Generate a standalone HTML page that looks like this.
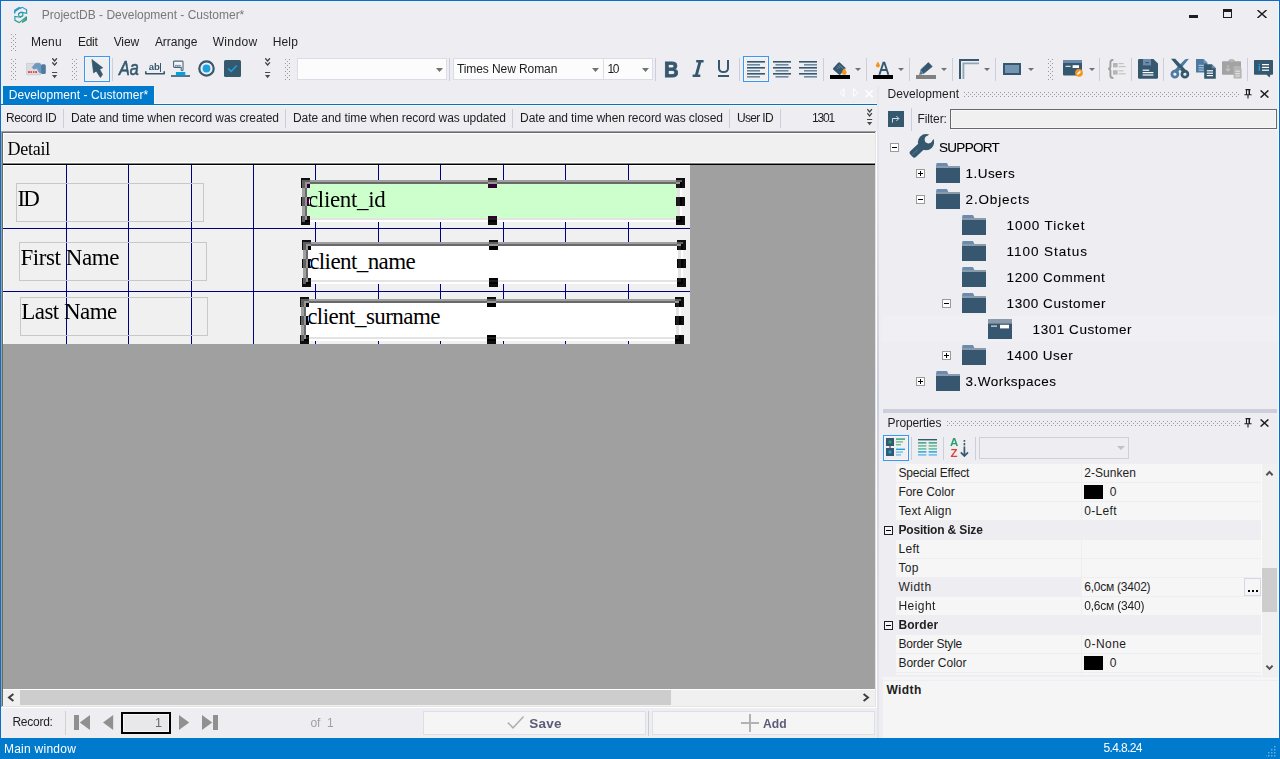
<!DOCTYPE html>
<html><head><meta charset="utf-8"><title>ProjectDB - Development - Customer*</title>
<style>
html,body{margin:0;padding:0;}
body{width:1280px;height:759px;overflow:hidden;position:relative;background:#eeeef2;}
div,span,svg{position:absolute;box-sizing:border-box;}
.t{white-space:pre;}
.s{font-family:"Liberation Sans",sans-serif;}
.r{font-family:"Liberation Serif",serif;}
.m{font-family:"Liberation Mono",monospace;}
.h{background:#fff;mix-blend-mode:difference;width:9px;height:9px;}
</style></head><body>
<div style="left:0px;top:0px;width:1280px;height:1px;background:#0a6fcc;"></div>
<div style="left:0px;top:0px;width:1px;height:759px;background:#0a6fcc;"></div>
<div style="left:1279px;top:0px;width:1px;height:759px;background:#0a6fcc;"></div>
<svg style="left:13px;top:6px;" width="16" height="18" viewBox="0 0 16 18"><defs><linearGradient id="lg" gradientUnits="userSpaceOnUse" x1="3" y1="1" x2="10" y2="17"><stop offset="0" stop-color="#2a9adf"/><stop offset="0.55" stop-color="#2a9aa8"/><stop offset="1" stop-color="#2e9e6e"/></linearGradient></defs>
<g fill="none" stroke="url(#lg)" stroke-width="1.15" stroke-linejoin="miter">
<path d="M1.6 7.6V4.4L5.8 1.6L7.4 1.8L2.2 5.4Z"/>
<path d="M7.2 2.6L9.4 1.3L13.6 3.8V7.3L8 6.2L5.6 7.6V9.8"/>
<path d="M5.6 7.7L8 6.3L9.8 7.3V9.6L7.6 10.9L5.6 9.8"/>
<path d="M1.4 10.4L7.4 11.2L9.8 9.8"/>
<path d="M1.9 10.6V14.3L6.2 16.6L13 11.2"/>
<path d="M13.4 10.4V14L9 16.4L12.6 13.2Z"/>
</g></svg>
<span id="t1" class="t s" style="top:8.84px;font-size:12px;line-height:12px;color:#787878;left:41.80px;letter-spacing:-0.007px;">ProjectDB - Development - Customer*</span>
<div style="left:1189px;top:15px;width:9px;height:3px;background:#1e1e1e;"></div>
<div style="left:1223px;top:9px;width:9px;height:9px;border:1px solid #1e1e1e;border-top-width:3px;"></div>
<svg style="left:1257px;top:10px;" width="10" height="8" viewBox="0 0 10 8"><path d="M0.5 0L9.5 8M9.5 0L0.5 8" stroke="#1e1e1e" stroke-width="1.5" fill="none"/></svg>
<svg style="left:11px;top:34px;" width="5" height="17" viewBox="0 0 5 17"><g fill="#999"><rect x="0" y="0" width="1" height="1"/><rect x="4" y="0" width="1" height="1"/><rect x="2" y="2" width="1" height="1"/><rect x="0" y="4" width="1" height="1"/><rect x="4" y="4" width="1" height="1"/><rect x="2" y="6" width="1" height="1"/><rect x="0" y="8" width="1" height="1"/><rect x="4" y="8" width="1" height="1"/><rect x="2" y="10" width="1" height="1"/><rect x="0" y="12" width="1" height="1"/><rect x="4" y="12" width="1" height="1"/><rect x="2" y="14" width="1" height="1"/><rect x="0" y="16" width="1" height="1"/><rect x="4" y="16" width="1" height="1"/></g></svg>
<span id="t2" class="t s" style="top:35.84px;font-size:12px;line-height:12px;color:#1e1e1e;left:30.90px;letter-spacing:0.240px;">Menu</span>
<span id="t3" class="t s" style="top:35.84px;font-size:12px;line-height:12px;color:#1e1e1e;left:77.90px;letter-spacing:-0.229px;">Edit</span>
<span id="t4" class="t s" style="top:35.84px;font-size:12px;line-height:12px;color:#1e1e1e;left:113.65px;letter-spacing:-0.099px;">View</span>
<span id="t5" class="t s" style="top:35.84px;font-size:12px;line-height:12px;color:#1e1e1e;left:154.90px;letter-spacing:-0.034px;">Arrange</span>
<span id="t6" class="t s" style="top:35.84px;font-size:12px;line-height:12px;color:#1e1e1e;left:212.65px;letter-spacing:0.362px;">Window</span>
<span id="t7" class="t s" style="top:35.84px;font-size:12px;line-height:12px;color:#1e1e1e;left:272.65px;letter-spacing:0.188px;">Help</span>
<svg style="left:11px;top:59px;" width="5" height="22" viewBox="0 0 5 22"><g fill="#999"><rect x="0" y="0" width="1" height="1"/><rect x="4" y="0" width="1" height="1"/><rect x="2" y="2" width="1" height="1"/><rect x="0" y="4" width="1" height="1"/><rect x="4" y="4" width="1" height="1"/><rect x="2" y="6" width="1" height="1"/><rect x="0" y="8" width="1" height="1"/><rect x="4" y="8" width="1" height="1"/><rect x="2" y="10" width="1" height="1"/><rect x="0" y="12" width="1" height="1"/><rect x="4" y="12" width="1" height="1"/><rect x="2" y="14" width="1" height="1"/><rect x="0" y="16" width="1" height="1"/><rect x="4" y="16" width="1" height="1"/><rect x="2" y="18" width="1" height="1"/><rect x="0" y="20" width="1" height="1"/><rect x="4" y="20" width="1" height="1"/></g></svg>
<svg style="left:26px;top:62px;" width="20" height="14" viewBox="0 0 20 14"><rect x="0.3" y="1.4" width="14.5" height="11.3" rx="0.6" fill="#d9dde1" stroke="#c2c7cb" stroke-width="0.7"/>
<g fill="#e9463f"><rect x="2" y="9.1" width="1.9" height="1.9"/><rect x="4.4" y="9.1" width="1.7" height="1.9"/><rect x="7" y="9.1" width="1.4" height="1.9"/><rect x="9.1" y="9.1" width="1.9" height="1.9"/></g>
<path d="M6.2 5.4L9.5 1.5L13 1.2L15.4 3V11.2L12.9 10L11.2 6.1L7.7 7Z" fill="#7099bf" stroke="#7099bf" stroke-width="0.9" stroke-linejoin="round"/>
<rect x="15.1" y="2.2" width="4.7" height="9.9" rx="1.5" fill="#4f7aa0"/></svg>
<svg style="left:52px;top:58px;" width="6" height="21" viewBox="0 0 6 21"><g fill="none" stroke="#3f3f3f" stroke-width="1.3"><path d="M0.3 0.3L2.6 3L4.9 0.3M0.3 4.3L2.6 7L4.9 4.3"/></g><rect x="0" y="14" width="5.2" height="1" fill="#4a4a4a"/><path d="M0 17H5.2L2.6 20.2Z" fill="#4a4a4a"/></svg>
<svg style="left:72px;top:59px;" width="5" height="22" viewBox="0 0 5 22"><g fill="#999"><rect x="0" y="0" width="1" height="1"/><rect x="4" y="0" width="1" height="1"/><rect x="2" y="2" width="1" height="1"/><rect x="0" y="4" width="1" height="1"/><rect x="4" y="4" width="1" height="1"/><rect x="2" y="6" width="1" height="1"/><rect x="0" y="8" width="1" height="1"/><rect x="4" y="8" width="1" height="1"/><rect x="2" y="10" width="1" height="1"/><rect x="0" y="12" width="1" height="1"/><rect x="4" y="12" width="1" height="1"/><rect x="2" y="14" width="1" height="1"/><rect x="0" y="16" width="1" height="1"/><rect x="4" y="16" width="1" height="1"/><rect x="2" y="18" width="1" height="1"/><rect x="0" y="20" width="1" height="1"/><rect x="4" y="20" width="1" height="1"/></g></svg>
<div style="left:84px;top:56px;width:26px;height:26px;background:#efeff1;border:1px solid #3399ff;box-shadow:inset 0 0 0 1px #fbf4ee;"></div>
<svg style="left:90px;top:59px;" width="14" height="20" viewBox="0 0 14 20"><path d="M1.9 0.5L12.7 8.8L9.7 10.2L12.5 15.6L10.4 18.5L6.2 12L3.6 13.9Z" fill="#35586e" stroke="#35586e" stroke-width="0.7" stroke-linejoin="round"/></svg>
<div style="left:112px;top:58px;width:1px;height:23px;background:#cccedb;"></div>
<span id="t8" class="t s" style="top:59.09px;font-size:19.5px;line-height:19.5px;color:#35586e;left:118.60px;font-style:italic;-webkit-text-stroke:0.55px #35586e;transform:scaleX(0.83);transform-origin:0 0;">Aa</span>
<svg style="left:145px;top:63px;" width="20" height="13" viewBox="0 0 20 13"><g fill="none" stroke="#35586e"><path d="M0.8 8.2V10.8H19.2V8.2" stroke-width="1.6" stroke-linejoin="round"/></g></svg>
<span id="t9" class="t s" style="top:61.96px;font-size:9.5px;line-height:9.5px;color:#35586e;left:148.80px;font-weight:bold;">ab</span>
<div style="left:160px;top:63px;width:1px;height:9px;background:#35586e;"></div>
<svg style="left:171px;top:60px;" width="19" height="17" viewBox="0 0 19 17"><rect x="0" y="15.2" width="19" height="1.6" fill="#35586e"/><rect x="4.9" y="12" width="9.4" height="3.2" fill="#00a2e0"/>
<path d="M2.6 1.8Q2.6 1.1 3.4 1.1H11Q12 1.1 12 2V9.8Q12 10.7 11.1 10.7Q10.2 10.7 10.2 9.8V7.4H3.4Q2.6 7.4 2.6 6.6Z" fill="#f4f5f7" stroke="#4a657c" stroke-width="1.1"/><path d="M4.6 5.4V7M6.4 5.4V7M8.2 5.4V7M4.2 5.4H10" stroke="#6d8499" stroke-width="0.8" fill="none"/></svg>
<svg style="left:198px;top:60px;" width="17" height="17" viewBox="0 0 17 17"><circle cx="8.5" cy="8.5" r="7.2" fill="none" stroke="#35586e" stroke-width="2.2"/><circle cx="8.5" cy="8.5" r="3.9" fill="#1ba1e2"/></svg>
<svg style="left:224px;top:60px;" width="17" height="17" viewBox="0 0 17 17"><rect width="17" height="17" rx="1.5" fill="#35586e"/><path d="M4.2 8.6L7.2 11.4L12.8 5.4" fill="none" stroke="#1ba1e2" stroke-width="1.5"/></svg>
<svg style="left:265px;top:58px;" width="6" height="21" viewBox="0 0 6 21"><g fill="none" stroke="#3f3f3f" stroke-width="1.3"><path d="M0.3 0.3L2.6 3L4.9 0.3M0.3 4.3L2.6 7L4.9 4.3"/></g><rect x="0" y="14" width="5.2" height="1" fill="#4a4a4a"/><path d="M0 17H5.2L2.6 20.2Z" fill="#4a4a4a"/></svg>
<svg style="left:285px;top:59px;" width="5" height="22" viewBox="0 0 5 22"><g fill="#999"><rect x="0" y="0" width="1" height="1"/><rect x="4" y="0" width="1" height="1"/><rect x="2" y="2" width="1" height="1"/><rect x="0" y="4" width="1" height="1"/><rect x="4" y="4" width="1" height="1"/><rect x="2" y="6" width="1" height="1"/><rect x="0" y="8" width="1" height="1"/><rect x="4" y="8" width="1" height="1"/><rect x="2" y="10" width="1" height="1"/><rect x="0" y="12" width="1" height="1"/><rect x="4" y="12" width="1" height="1"/><rect x="2" y="14" width="1" height="1"/><rect x="0" y="16" width="1" height="1"/><rect x="4" y="16" width="1" height="1"/><rect x="2" y="18" width="1" height="1"/><rect x="0" y="20" width="1" height="1"/><rect x="4" y="20" width="1" height="1"/></g></svg>
<div style="left:297px;top:58px;width:150px;height:22px;background:#fcfcfd;border:1px solid #dbdde6;"></div>
<svg style="left:436px;top:68px;" width="7" height="4" viewBox="0 0 7 4"><path d="M0 0H7L3.5 4Z" fill="#717171"/></svg>
<div style="left:449px;top:58px;width:1px;height:23px;background:#cccedb;"></div>
<div style="left:453px;top:58px;width:200px;height:22px;background:#fcfcfd;border:1px solid #dbdde6;"></div>
<div style="left:603px;top:59px;width:1px;height:20px;background:#dbdde6;"></div>
<svg style="left:592px;top:68px;" width="7" height="4" viewBox="0 0 7 4"><path d="M0 0H7L3.5 4Z" fill="#717171"/></svg>
<svg style="left:642px;top:68px;" width="7" height="4" viewBox="0 0 7 4"><path d="M0 0H7L3.5 4Z" fill="#717171"/></svg>
<span id="t10" class="t s" style="top:62.84px;font-size:12px;line-height:12px;color:#1e1e1e;left:456.90px;letter-spacing:-0.077px;">Times New Roman</span>
<span id="t11" class="t s" style="top:62.84px;font-size:12px;line-height:12px;color:#1e1e1e;left:607.40px;letter-spacing:-1.359px;">10</span>
<div style="left:655px;top:58px;width:1px;height:23px;background:#cccedb;"></div>
<span id="t12" class="t s" style="top:58.55px;font-size:22.5px;line-height:22.5px;color:#35586e;left:664.40px;font-weight:bold;transform:scaleX(0.9);transform-origin:0 0;-webkit-text-stroke:0.9px #35586e;">B</span>
<svg style="left:692px;top:60px;" width="12" height="17" viewBox="0 0 12 17"><path d="M4.2 0H11.6V2.4H9.3L6 14.6H8.3V17H0.6V14.6H3L6.3 2.4H4.2Z" fill="#35586e"/></svg>
<svg style="left:718px;top:60px;" width="11" height="17" viewBox="0 0 11 17"><path d="M1 0V8.2Q1 12 5.5 12Q10 12 10 8.2V0" fill="none" stroke="#35586e" stroke-width="2"/><rect x="0" y="15" width="11" height="2" fill="#35586e"/></svg>
<div style="left:739px;top:58px;width:1px;height:23px;background:#cccedb;"></div>
<div style="left:743px;top:56px;width:26px;height:26px;background:#efeff1;border:1px solid #3399ff;box-shadow:inset 0 0 0 1px #fbf4ee;"></div>
<svg style="left:747px;top:61px;" width="18" height="17" viewBox="0 0 18 17"><rect x="0" y="0" width="18" height="1.6" fill="#35586e"/><rect x="0" y="3" width="13" height="1.6" fill="#6d88a2"/><rect x="0" y="6" width="18" height="1.6" fill="#35586e"/><rect x="0" y="9" width="13" height="1.6" fill="#6d88a2"/><rect x="0" y="12" width="18" height="1.6" fill="#35586e"/><rect x="0" y="15" width="13" height="1.6" fill="#6d88a2"/></svg>
<svg style="left:773px;top:61px;" width="18" height="17" viewBox="0 0 18 17"><rect x="0.0" y="0" width="18" height="1.6" fill="#35586e"/><rect x="2.5" y="3" width="13" height="1.6" fill="#6d88a2"/><rect x="0.0" y="6" width="18" height="1.6" fill="#35586e"/><rect x="2.5" y="9" width="13" height="1.6" fill="#6d88a2"/><rect x="0.0" y="12" width="18" height="1.6" fill="#35586e"/><rect x="2.5" y="15" width="13" height="1.6" fill="#6d88a2"/></svg>
<svg style="left:799px;top:61px;" width="18" height="17" viewBox="0 0 18 17"><rect x="0" y="0" width="18" height="1.6" fill="#35586e"/><rect x="5" y="3" width="13" height="1.6" fill="#6d88a2"/><rect x="0" y="6" width="18" height="1.6" fill="#35586e"/><rect x="5" y="9" width="13" height="1.6" fill="#6d88a2"/><rect x="0" y="12" width="18" height="1.6" fill="#35586e"/><rect x="5" y="15" width="13" height="1.6" fill="#6d88a2"/></svg>
<div style="left:823px;top:58px;width:1px;height:23px;background:#cccedb;"></div>
<svg style="left:829px;top:60px;" width="22" height="19" viewBox="0 0 22 19"><g transform="rotate(42 10.3 8.6)"><rect x="5.5" y="3.8" width="9.6" height="9.6" rx="1.2" fill="#35586e"/><path d="M7.6 6H13M7.6 7.8H10.6M7.6 9.6H9.4" stroke="#7f99ae" stroke-width="0.7"/></g>
<path d="M15.2 8Q17.6 11.4 17.6 12.6A2.4 2.4 0 0 1 12.8 12.6Q12.8 11.4 15.2 8Z" fill="#f7941d"/><rect x="1" y="15" width="20" height="4" fill="#000"/></svg>
<svg style="left:855px;top:68px;" width="6" height="3" viewBox="0 0 6 3"><path d="M0 0H6L3.0 3Z" fill="#717171"/></svg>
<div style="left:866px;top:58px;width:1px;height:23px;background:#cccedb;"></div>
<svg style="left:872px;top:60px;" width="22" height="19" viewBox="0 0 22 19"><path d="M7.4 14.8L11.4 2.6H12.4L16.4 14.8M8.9 10H14.9" fill="none" stroke="#35586e" stroke-width="1.9"/>
<path d="M5.9 1.6Q7.9 4.6 7.9 5.6A2 2 0 0 1 3.9 5.6Q3.9 4.6 5.9 1.6Z" fill="#f7941d"/><rect x="1" y="15" width="20" height="4" fill="#000"/></svg>
<svg style="left:898px;top:68px;" width="6" height="3" viewBox="0 0 6 3"><path d="M0 0H6L3.0 3Z" fill="#717171"/></svg>
<div style="left:909px;top:58px;width:1px;height:23px;background:#cccedb;"></div>
<svg style="left:915px;top:60px;" width="22" height="19" viewBox="0 0 22 19"><path d="M13.4 2.6L17.2 6.6L8.6 13.6L5.6 9.9Z" fill="#35586e" stroke="#35586e" stroke-width="0.8" stroke-linejoin="round"/><path d="M5.6 10.4L8.2 13.6L5.8 15L4.4 13.4Z" fill="#4d7aa3"/><path d="M4.4 13.2L6 15L3.4 15.4Z" fill="#f7941d"/><rect x="1" y="15" width="20" height="4" fill="#808080"/></svg>
<svg style="left:941px;top:68px;" width="6" height="3" viewBox="0 0 6 3"><path d="M0 0H6L3.0 3Z" fill="#717171"/></svg>
<div style="left:952px;top:58px;width:1px;height:23px;background:#cccedb;"></div>
<svg style="left:959px;top:59px;" width="20" height="20" viewBox="0 0 20 20"><path d="M1 20V1H20" fill="none" stroke="#35586e" stroke-width="2"/><path d="M4.4 20V4.4H20" fill="none" stroke="#93a4b5" stroke-width="1.8"/></svg>
<svg style="left:984px;top:68px;" width="6" height="3" viewBox="0 0 6 3"><path d="M0 0H6L3.0 3Z" fill="#717171"/></svg>
<div style="left:995px;top:58px;width:1px;height:23px;background:#cccedb;"></div>
<div style="left:1003px;top:63px;width:18px;height:12px;background:#7494b4;border:2px solid #35586e;"></div>
<svg style="left:1028px;top:68px;" width="6" height="3" viewBox="0 0 6 3"><path d="M0 0H6L3.0 3Z" fill="#717171"/></svg>
<svg style="left:1048px;top:59px;" width="5" height="22" viewBox="0 0 5 22"><g fill="#999"><rect x="0" y="0" width="1" height="1"/><rect x="4" y="0" width="1" height="1"/><rect x="2" y="2" width="1" height="1"/><rect x="0" y="4" width="1" height="1"/><rect x="4" y="4" width="1" height="1"/><rect x="2" y="6" width="1" height="1"/><rect x="0" y="8" width="1" height="1"/><rect x="4" y="8" width="1" height="1"/><rect x="2" y="10" width="1" height="1"/><rect x="0" y="12" width="1" height="1"/><rect x="4" y="12" width="1" height="1"/><rect x="2" y="14" width="1" height="1"/><rect x="0" y="16" width="1" height="1"/><rect x="4" y="16" width="1" height="1"/><rect x="2" y="18" width="1" height="1"/><rect x="0" y="20" width="1" height="1"/><rect x="4" y="20" width="1" height="1"/></g></svg>
<svg style="left:1063px;top:60px;" width="20" height="17" viewBox="0 0 20 17"><rect x="0" y="0" width="19" height="15.4" rx="1" fill="#35586e"/><rect x="0" y="0" width="19" height="3" fill="#6d8cab"/>
<rect x="2.6" y="5.8" width="5" height="1" fill="#fff"/><rect x="9.6" y="5.2" width="6.4" height="2.8" fill="#fff"/>
<circle cx="16" cy="12.8" r="3.9" fill="#f7941d"/><path d="M14.4 14.4L17.4 11.4" stroke="#fff" stroke-width="1.5"/></svg>
<svg style="left:1089px;top:68px;" width="6" height="3" viewBox="0 0 6 3"><path d="M0 0H6L3.0 3Z" fill="#717171"/></svg>
<div style="left:1099px;top:58px;width:1px;height:23px;background:#cccedb;"></div>
<svg style="left:1107px;top:59px;" width="19" height="20" viewBox="0 0 19 20"><path d="M6.4 0.8Q3.4 0.8 3.4 3.4V7.6Q3.4 9.6 1.2 9.8Q3.4 10 3.4 12V16.4Q3.4 19 6.4 19" fill="none" stroke="#9e9e9e" stroke-width="1.9"/>
<rect x="6" y="4" width="4.6" height="4.4" fill="#b5b5b5"/><rect x="6" y="11.2" width="4.6" height="4.4" fill="#b5b5b5"/>
<rect x="11.6" y="4" width="5" height="1.2" fill="#c2c2c2"/><rect x="11.6" y="7" width="7" height="1.2" fill="#c2c2c2"/><rect x="11.6" y="11.2" width="5" height="1.2" fill="#c2c2c2"/><rect x="11.6" y="14.2" width="7" height="1.2" fill="#c2c2c2"/></svg>
<div style="left:1131px;top:58px;width:1px;height:23px;background:#cccedb;"></div>
<svg style="left:1138px;top:59px;" width="20" height="20" viewBox="0 0 20 20"><path d="M1.2 0H15.4L20 4.4V18.6Q20 19.8 18.8 19.8H1.2Q0 19.8 0 18.6V1.2Q0 0 1.2 0Z" fill="#35586e"/>
<rect x="5" y="0" width="8" height="6.4" fill="#6d8cab"/><rect x="7.4" y="3" width="3.4" height="1.2" fill="#35586e"/>
<rect x="4.6" y="10.6" width="6.6" height="1.2" fill="#fff"/><rect x="4.6" y="13" width="10.8" height="1.2" fill="#fff"/><rect x="4.6" y="15.4" width="10.8" height="1.2" fill="#fff"/></svg>
<div style="left:1163px;top:58px;width:1px;height:23px;background:#cccedb;"></div>
<svg style="left:1170px;top:58px;" width="20" height="21" viewBox="0 0 20 21"><path d="M19 0.8L15.2 1.2L3.2 13.2L6.8 15.4Z" fill="#4d7aa3"/><circle cx="4.9" cy="16.2" r="3" fill="none" stroke="#4d7aa3" stroke-width="2.7"/>
<path d="M1 0.8L5.2 0.8L17 13.2L13.4 15.4Z" fill="#35586e"/><circle cx="14.9" cy="16.2" r="3" fill="none" stroke="#35586e" stroke-width="2.7"/><circle cx="10" cy="10.4" r="0.7" fill="#7a9dbf"/></svg>
<svg style="left:1196px;top:59px;" width="20" height="20" viewBox="0 0 20 20"><path d="M0 0H7.6L11.4 3.8V13.4H0Z" fill="#4d7aa3"/><path d="M7.6 0L11.4 3.8H7.6Z" fill="#7a9dbf"/>
<rect x="2.6" y="5.8" width="5.2" height="1.2" fill="#a9c0d6"/><rect x="2.6" y="8.2" width="5.2" height="1.2" fill="#a9c0d6"/><rect x="2.6" y="10.6" width="5.2" height="1.2" fill="#a9c0d6"/>
<path d="M8.2 5.2H15.8L19.8 9.2V19.8H8.2Z" fill="#35586e"/><path d="M15.8 5.2L19.8 9.2H15.8Z" fill="#6d8cab"/>
<rect x="10.8" y="11.2" width="6.2" height="1.2" fill="#fff"/><rect x="10.8" y="13.6" width="6.2" height="1.2" fill="#fff"/><rect x="10.8" y="16" width="6.2" height="1.2" fill="#fff"/></svg>
<svg style="left:1222px;top:59px;" width="20" height="20" viewBox="0 0 20 20"><rect x="0" y="2.2" width="19" height="13.6" rx="0.8" fill="#a3a3a3"/><path d="M6.4 2.4Q6.4 0.2 9.6 0.2Q12.8 0.2 12.8 2.4Z" fill="#a3a3a3"/><path d="M7.8 2H11.4" stroke="#c9c9c9" stroke-width="0.9"/>
<path d="M6 6V12M3.8 9.8L6 12L8.2 9.8" fill="none" stroke="#c4c4c4" stroke-width="1.1"/>
<path d="M11.6 7H17L19.6 9.6V19.4H11.6Z" fill="#b5b5b5"/><rect x="13.4" y="11.6" width="4.4" height="1.2" fill="#e2e2e2"/><rect x="13.4" y="14" width="4.4" height="1.2" fill="#e2e2e2"/><rect x="13.4" y="16.4" width="4.4" height="1.2" fill="#e2e2e2"/></svg>
<div style="left:1247px;top:58px;width:1px;height:23px;background:#cccedb;"></div>
<svg style="left:1254px;top:60px;" width="20" height="18" viewBox="0 0 20 18"><path d="M0.8 0H18.2Q19 0 19 0.8V14Q19 14.8 18.2 14.8H16.4L15.6 17.6L12.6 14.8H0.8Q0 14.8 0 14V0.8Q0 0 0.8 0Z" fill="#35586e"/>
<rect x="4.6" y="3.8" width="1.4" height="1.4" fill="#1ba1e2"/><rect x="4.6" y="6" width="1.4" height="4.8" fill="#1ba1e2"/><rect x="8" y="4" width="7" height="1.2" fill="#fff"/><rect x="8" y="6.8" width="7" height="1.2" fill="#fff"/><rect x="8" y="9.6" width="7" height="1.2" fill="#fff"/></svg>
<div style="left:3px;top:86px;width:151px;height:19px;background:#007acc;"></div>
<div style="left:1px;top:104px;width:876px;height:1px;background:#0173c9;"></div>
<div style="left:154px;top:103px;width:723px;height:1px;background:#faf5f2;"></div>
<div style="left:1px;top:105px;width:876px;height:1px;background:#faf5f2;"></div>
<div style="left:154px;top:87px;width:1px;height:16px;background:#f8f4f2;"></div>
<span id="t13" class="t s" style="top:88.84px;font-size:12px;line-height:12px;color:#ffffff;left:8.80px;letter-spacing:0.065px;">Development - Customer*</span>
<svg style="left:839px;top:88px;" width="6" height="10" viewBox="0 0 6 10"><path d="M5 0.6V8.6L0.7 4.6Z" fill="none" stroke="#fff" stroke-width="1"/></svg>
<svg style="left:853px;top:88px;" width="6" height="10" viewBox="0 0 6 10"><path d="M0.6 0.6V8.6L4.9 4.6Z" fill="none" stroke="#fff" stroke-width="1"/></svg>
<svg style="left:865px;top:90px;" width="9" height="8" viewBox="0 0 9 8"><path d="M0.6 0.3L7.6 7.3M7.6 0.3L0.6 7.3" stroke="#fff" stroke-width="1.6" fill="none"/></svg>
<span id="t14" class="t s" style="top:111.84px;font-size:12px;line-height:12px;color:#1e1e1e;left:6.00px;letter-spacing:-0.429px;">Record ID</span>
<div style="left:63px;top:109px;width:1px;height:19px;background:#cccedb;"></div>
<span id="t15" class="t s" style="top:111.84px;font-size:12px;line-height:12px;color:#1e1e1e;left:70.90px;letter-spacing:-0.114px;">Date and time when record was created</span>
<div style="left:285px;top:109px;width:1px;height:19px;background:#cccedb;"></div>
<span id="t16" class="t s" style="top:111.84px;font-size:12px;line-height:12px;color:#1e1e1e;left:293.00px;letter-spacing:-0.069px;">Date and time when record was updated</span>
<div style="left:512px;top:109px;width:1px;height:19px;background:#cccedb;"></div>
<span id="t17" class="t s" style="top:111.84px;font-size:12px;line-height:12px;color:#1e1e1e;left:520.10px;letter-spacing:-0.114px;">Date and time when record was closed</span>
<div style="left:729px;top:109px;width:1px;height:19px;background:#cccedb;"></div>
<span id="t18" class="t s" style="top:111.84px;font-size:12px;line-height:12px;color:#1e1e1e;left:736.90px;letter-spacing:-0.645px;">User ID</span>
<div style="left:780px;top:109px;width:1px;height:19px;background:#cccedb;"></div>
<span id="t19" class="t s" style="top:111.84px;font-size:12px;line-height:12px;color:#1e1e1e;left:811.90px;letter-spacing:-1.168px;">1301</span>
<svg style="left:867px;top:108px;" width="6" height="18" viewBox="0 0 6 18"><g fill="none" stroke="#3f3f3f" stroke-width="1.3"><path d="M0.3 1.2L2.6 3.9L4.9 1.2M0.3 5.2L2.6 7.9L4.9 5.2"/></g><rect x="0" y="11" width="5.2" height="1" fill="#4a4a4a"/><path d="M0 14H5.2L2.6 17.2Z" fill="#4a4a4a"/></svg>
<div style="left:1px;top:131px;width:876px;height:577px;background:#a0a0a0;"></div>
<div style="left:2px;top:132px;width:874px;height:575px;background:#696969;"></div>
<div style="left:3px;top:133px;width:872px;height:556px;background:#a0a0a0;"></div>
<div style="left:875px;top:132px;width:1px;height:575px;background:#e3e3e3;"></div>
<div style="left:876px;top:131px;width:1px;height:577px;background:#ffffff;"></div>
<div style="left:2px;top:706px;width:874px;height:1px;background:#e3e3e3;"></div>
<div style="left:1px;top:707px;width:876px;height:1px;background:#ffffff;"></div>
<div style="left:3px;top:133px;width:872px;height:32px;background:#f0f0f0;"></div>
<div style="left:3px;top:133px;width:872px;height:1px;background:#ffffff;"></div>
<div style="left:3px;top:133px;width:1px;height:30px;background:#ffffff;"></div>
<div style="left:3px;top:162px;width:872px;height:1px;background:#ffffff;"></div>
<div style="left:3px;top:163px;width:872px;height:1px;background:#808080;"></div>
<div style="left:3px;top:164px;width:872px;height:1px;background:#000000;"></div>
<span id="t20" class="t r" style="top:139.93px;font-size:18px;line-height:18px;color:#000;left:7.40px;letter-spacing:-0.217px;">Detail</span>
<div style="left:3px;top:165px;width:687px;height:179px;background:#f0f0f0;"></div>
<div style="left:3px;top:165px;width:687px;height:1px;background:#ffffff;"></div>
<div style="left:3px;top:165px;width:1px;height:179px;background:#ffffff;"></div>
<div style="left:66px;top:165px;width:1px;height:179px;background:#000080;"></div>
<div style="left:128px;top:165px;width:1px;height:179px;background:#000080;"></div>
<div style="left:191px;top:165px;width:1px;height:179px;background:#000080;"></div>
<div style="left:253px;top:165px;width:1px;height:179px;background:#000080;"></div>
<div style="left:315px;top:165px;width:1px;height:179px;background:#000080;"></div>
<div style="left:378px;top:165px;width:1px;height:179px;background:#000080;"></div>
<div style="left:440px;top:165px;width:1px;height:179px;background:#000080;"></div>
<div style="left:503px;top:165px;width:1px;height:179px;background:#000080;"></div>
<div style="left:565px;top:165px;width:1px;height:179px;background:#000080;"></div>
<div style="left:628px;top:165px;width:1px;height:179px;background:#000080;"></div>
<div style="left:3px;top:228px;width:687px;height:1px;background:#000080;"></div>
<div style="left:3px;top:291px;width:687px;height:1px;background:#000080;"></div>
<div style="left:16px;top:183px;width:188px;height:39px;border:1px solid #c8c8c8;"></div>
<span id="t21" class="t r" style="top:186.94px;font-size:23px;line-height:23px;color:#000;left:17.50px;letter-spacing:-1.881px;">ID</span>
<div style="left:19px;top:242px;width:188px;height:39px;border:1px solid #c8c8c8;"></div>
<span id="t22" class="t r" style="top:245.94px;font-size:23px;line-height:23px;color:#000;left:20.40px;letter-spacing:-0.429px;">First Name</span>
<div style="left:20px;top:297px;width:188px;height:39px;border:1px solid #c8c8c8;"></div>
<span id="t23" class="t r" style="top:299.94px;font-size:23px;line-height:23px;color:#000;left:21.20px;letter-spacing:-0.521px;">Last Name</span>
<div style="left:3px;top:165px;width:687px;height:179px;overflow:hidden;">
<div style="left:299px;top:15px;width:380px;height:42px;background:#ffffff;"></div>
<div style="left:299px;top:15px;width:380px;height:2px;background:#a0a0a0;"></div>
<div style="left:299px;top:15px;width:3px;height:42px;background:#a0a0a0;"></div>
<div style="left:302px;top:17px;width:375px;height:38px;background:#e3e3e3;"></div>
<div style="left:302px;top:17px;width:375px;height:2px;background:#696969;"></div>
<div style="left:302px;top:17px;width:2px;height:38px;background:#696969;"></div>
<div style="left:304px;top:19px;width:370px;height:34px;background:#ccffcc;"></div>
<span id="t24" class="t r" style="top:22.94px;font-size:23px;line-height:23px;color:#000;left:305.00px;letter-spacing:-0.348px;">client_id</span>
<div class="h" style="left:298px;top:13px;height:10px;"></div>
<div class="h" style="left:298px;top:32px;"></div>
<div class="h" style="left:298px;top:51px;"></div>
<div class="h" style="left:485px;top:13px;height:10px;"></div>
<div class="h" style="left:485px;top:51px;"></div>
<div class="h" style="left:673px;top:13px;height:10px;"></div>
<div class="h" style="left:673px;top:32px;"></div>
<div class="h" style="left:673px;top:51px;"></div>
<div style="left:300px;top:77px;width:380px;height:42px;background:#ffffff;"></div>
<div style="left:300px;top:77px;width:380px;height:2px;background:#a0a0a0;"></div>
<div style="left:300px;top:77px;width:3px;height:42px;background:#a0a0a0;"></div>
<div style="left:303px;top:79px;width:375px;height:38px;background:#e3e3e3;"></div>
<div style="left:303px;top:79px;width:375px;height:2px;background:#696969;"></div>
<div style="left:303px;top:79px;width:2px;height:38px;background:#696969;"></div>
<div style="left:305px;top:81px;width:370px;height:34px;background:#ffffff;"></div>
<span id="t25" class="t r" style="top:84.74px;font-size:23px;line-height:23px;color:#000;left:306.20px;letter-spacing:-0.591px;">client_name</span>
<div class="h" style="left:299px;top:75px;height:10px;"></div>
<div class="h" style="left:299px;top:94px;"></div>
<div class="h" style="left:299px;top:113px;"></div>
<div class="h" style="left:486px;top:75px;height:10px;"></div>
<div class="h" style="left:486px;top:113px;"></div>
<div class="h" style="left:674px;top:75px;height:10px;"></div>
<div class="h" style="left:674px;top:94px;"></div>
<div class="h" style="left:674px;top:113px;"></div>
<div style="left:298px;top:134px;width:380px;height:42px;background:#ffffff;"></div>
<div style="left:298px;top:134px;width:380px;height:2px;background:#a0a0a0;"></div>
<div style="left:298px;top:134px;width:3px;height:42px;background:#a0a0a0;"></div>
<div style="left:301px;top:136px;width:375px;height:38px;background:#e3e3e3;"></div>
<div style="left:301px;top:136px;width:375px;height:2px;background:#696969;"></div>
<div style="left:301px;top:136px;width:2px;height:38px;background:#696969;"></div>
<div style="left:303px;top:138px;width:370px;height:34px;background:#ffffff;"></div>
<span id="t26" class="t r" style="top:140.34px;font-size:23px;line-height:23px;color:#000;left:304.20px;letter-spacing:-0.555px;">client_surname</span>
<div class="h" style="left:297px;top:132px;height:10px;"></div>
<div class="h" style="left:297px;top:151px;"></div>
<div class="h" style="left:297px;top:170px;"></div>
<div class="h" style="left:484px;top:132px;height:10px;"></div>
<div class="h" style="left:484px;top:170px;"></div>
<div class="h" style="left:672px;top:132px;height:10px;"></div>
<div class="h" style="left:672px;top:151px;"></div>
<div class="h" style="left:672px;top:170px;"></div>
</div>
<div style="left:3px;top:689px;width:872px;height:17px;background:#f0f0f0;"></div>
<div style="left:3px;top:689px;width:872px;height:1px;background:#ffffff;"></div>
<div style="left:20px;top:690px;width:651px;height:15px;background:#cdcdcd;"></div>
<svg style="left:7px;top:693px;" width="8" height="9" viewBox="0 0 8 9"><path d="M6.4 0.9L2 4.5L6.4 8.1" fill="none" stroke="#404040" stroke-width="2"/></svg>
<svg style="left:862px;top:693px;" width="8" height="9" viewBox="0 0 8 9"><path d="M1.6 0.9L6 4.5L1.6 8.1" fill="none" stroke="#404040" stroke-width="2"/></svg>
<span id="t27" class="t s" style="top:716.34px;font-size:12px;line-height:12px;color:#1e1e1e;left:12.40px;letter-spacing:-0.255px;">Record:</span>
<div style="left:65px;top:711px;width:1px;height:24px;background:#d0d0d0;"></div>
<svg style="left:74px;top:715px;" width="16" height="15" viewBox="0 0 16 15"><rect x="0" y="0" width="5" height="15" fill="#909090"/><path d="M16 0V15L5.8 7.5Z" fill="#909090"/></svg>
<svg style="left:103px;top:715px;" width="11" height="15" viewBox="0 0 11 15"><path d="M10.2 0V15L0 7.5Z" fill="#909090"/></svg>
<div style="left:121px;top:712px;width:50px;height:22px;background:#e8e8ea;border:2px solid #000;box-shadow:inset 0 0 0 1px #f6f6f6;"></div>
<span id="t28" class="t s" style="top:717.02px;font-size:12.5px;line-height:12.5px;color:#6a6a6a;right:1118px;">1</span>
<svg style="left:179px;top:715px;" width="11" height="15" viewBox="0 0 11 15"><path d="M0 0V15L10.2 7.5Z" fill="#909090"/></svg>
<svg style="left:202px;top:715px;" width="16" height="15" viewBox="0 0 16 15"><rect x="11" y="0" width="5" height="15" fill="#909090"/><path d="M0 0V15L10.2 7.5Z" fill="#909090"/></svg>
<span id="t29" class="t s" style="top:716.84px;font-size:12px;line-height:12px;color:#a0a0a0;left:310.40px;letter-spacing:0.010px;">of  1</span>
<div style="left:648px;top:711px;width:1px;height:25px;background:#c9cad4;"></div>
<div style="left:423px;top:711px;width:223px;height:24px;background:#f5f5f5;border:1px solid #dcdfe8;"></div>
<div style="left:652px;top:711px;width:223px;height:24px;background:#f5f5f5;border:1px solid #dcdfe8;"></div>
<svg style="left:507px;top:715px;" width="18" height="15" viewBox="0 0 18 15"><path d="M0.8 7.6L6 12.8L16.6 1.6" fill="none" stroke="#b0b0b0" stroke-width="1.5"/></svg>
<span id="t30" class="t s" style="top:716.77px;font-size:13.5px;line-height:13.5px;color:#5b5b78;left:529.20px;font-weight:bold;letter-spacing:0.290px;">Save</span>
<svg style="left:741px;top:714px;" width="18" height="18" viewBox="0 0 18 18"><path d="M9 0V18M0 9H18" fill="none" stroke="#b2b2b2" stroke-width="2"/></svg>
<span id="t31" class="t s" style="top:716.77px;font-size:13.5px;line-height:13.5px;color:#5b5b78;left:762.80px;font-weight:bold;transform:scaleX(0.9);transform-origin:0 0;">Add</span>
<div style="left:0px;top:738px;width:1280px;height:21px;background:#007acc;"></div>
<span id="t32" class="t s" style="top:742.84px;font-size:12px;line-height:12px;color:#ffffff;left:3.90px;letter-spacing:0.263px;">Main window</span>
<span id="t33" class="t s" style="top:742.34px;font-size:12px;line-height:12px;color:#ffffff;left:1103.40px;letter-spacing:-0.625px;">5.4.8.24</span>
<svg style="left:1266px;top:746px;" width="11" height="11" viewBox="0 0 11 11"><g fill="#5fb0e6"><rect x="8" y="0" width="1.5" height="1.5"/><rect x="8" y="3" width="1.5" height="1.5"/><rect x="8" y="6" width="1.5" height="1.5"/><rect x="8" y="9" width="1.5" height="1.5"/><rect x="5" y="3" width="1.5" height="1.5"/><rect x="5" y="6" width="1.5" height="1.5"/><rect x="5" y="9" width="1.5" height="1.5"/><rect x="2" y="6" width="1.5" height="1.5"/><rect x="2" y="9" width="1.5" height="1.5"/><rect x="-1" y="9" width="1.5" height="1.5"/></g></svg>
<div style="left:877px;top:86px;width:2px;height:652px;background:linear-gradient(#e8e8ef 0%,#e2e3ea 15%,#cdd0dd 48%,#dcdde6 75%,#e4e5ec 100%);"></div>
<span id="t34" class="t s" style="top:87.84px;font-size:12px;line-height:12px;color:#1e1e1e;left:887.40px;letter-spacing:0.088px;">Development</span>
<svg style="left:964px;top:92px;" width="276" height="5" viewBox="0 0 276 5"><defs><pattern id="p964_92" width="4" height="4" patternUnits="userSpaceOnUse"><rect x="0" y="0" width="1" height="1" fill="#999"/><rect x="2" y="2" width="1" height="1" fill="#999"/></pattern></defs><rect width="276" height="5" fill="url(#p964_92)"/></svg>
<svg style="left:1244px;top:89px;" width="8" height="10" viewBox="0 0 8 10"><path d="M1.5 0.6H6.5M2.5 0.6V5.6M5.4 0.6V5.6M0.4 5.8H7.6M4 6V9.6" fill="none" stroke="#1e1e1e" stroke-width="1.1"/><rect x="4.6" y="0.6" width="1.4" height="5" fill="#1e1e1e"/></svg>
<svg style="left:1260px;top:90px;" width="9" height="8" viewBox="0 0 9 8"><path d="M0.6 0.4L8.4 7.6M8.4 0.4L0.6 7.6" stroke="#1e1e1e" stroke-width="1.4" fill="none"/></svg>
<div style="left:888px;top:111px;width:16px;height:16px;background:#35586e;"></div>
<svg style="left:888px;top:111px;" width="16" height="16" viewBox="0 0 16 16"><path d="M4.5 11.6V7.5H10.6M8.4 5L10.9 7.5L8.4 10" fill="none" stroke="#d5dfe7" stroke-width="1"/></svg>
<div style="left:911px;top:108px;width:1px;height:23px;background:#cccedb;"></div>
<span id="t35" class="t s" style="top:112.84px;font-size:12px;line-height:12px;color:#1e1e1e;left:917.40px;letter-spacing:-0.083px;">Filter:</span>
<div style="left:950px;top:109px;width:327px;height:20px;background:#f0f0f0;border:1px solid #696969;box-shadow:inset 0 0 0 1px #f7f7f7, 0 1px 0 #f7f7f9;"></div>
<div style="left:882px;top:316px;width:396px;height:26px;background:#f0f0f4;"></div>
<svg style="left:890px;top:143px;" width="9" height="9" viewBox="0 0 9 9"><rect x="0.5" y="0.5" width="8" height="8" fill="#fff" stroke="#9b9b9b"/><rect x="2" y="4" width="5" height="1" fill="#000"/></svg>
<svg style="left:909px;top:134px;" width="25" height="25" viewBox="0 0 25 25"><defs><mask id="wm"><rect x="-2" y="-4" width="30" height="32" fill="#fff"/><circle cx="19.5" cy="5.6" r="3.8" fill="#000"/><path d="M19.5 5.6L28 -2.9" stroke="#000" stroke-width="6.6"/></mask></defs>
<g mask="url(#wm)" fill="#35586e"><circle cx="17" cy="8.2" r="8.1"/><rect x="-4" y="0" width="8" height="19.4" rx="2.4" transform="translate(16.6,8.4) rotate(47)"/></g>
<path d="M3.6 20.6L8.8 15.4" stroke="#7f99ae" stroke-width="0.8" stroke-dasharray="1.2 0.5" fill="none"/></svg>
<span id="t36" class="t s" style="top:140.57px;font-size:13.5px;line-height:13.5px;color:#000;left:939.00px;letter-spacing:-0.703px;-webkit-text-stroke:0.08px #000;">SUPPORT</span>
<svg style="left:916px;top:169px;" width="9" height="9" viewBox="0 0 9 9"><rect x="0.5" y="0.5" width="8" height="8" fill="#fff" stroke="#9b9b9b"/><rect x="2" y="4" width="5" height="1" fill="#000"/><rect x="4" y="2" width="1" height="5" fill="#000"/></svg>
<svg style="left:936px;top:163px;" width="24" height="20" viewBox="0 0 24 20"><path d="M0.6 0H11L12.4 3H0Z" fill="#6a8caf"/><rect x="0" y="3" width="24" height="2.4" fill="#8c9bab"/><rect x="0" y="5" width="24" height="15" fill="#36576f"/></svg>
<span id="t37" class="t s" style="top:166.57px;font-size:13.5px;line-height:13.5px;color:#000;left:965.60px;letter-spacing:0.431px;-webkit-text-stroke:0.08px #000;">1.Users</span>
<svg style="left:916px;top:195px;" width="9" height="9" viewBox="0 0 9 9"><rect x="0.5" y="0.5" width="8" height="8" fill="#fff" stroke="#9b9b9b"/><rect x="2" y="4" width="5" height="1" fill="#000"/></svg>
<svg style="left:936px;top:189px;" width="24" height="20" viewBox="0 0 24 20"><path d="M0.6 0H11L12.4 3H0Z" fill="#6a8caf"/><rect x="0" y="3" width="24" height="2.4" fill="#8c9bab"/><rect x="0" y="5" width="24" height="15" fill="#36576f"/></svg>
<span id="t38" class="t s" style="top:192.57px;font-size:13.5px;line-height:13.5px;color:#000;left:965.60px;letter-spacing:0.834px;-webkit-text-stroke:0.08px #000;">2.Objects</span>
<svg style="left:962px;top:215px;" width="24" height="20" viewBox="0 0 24 20"><path d="M0.6 0H11L12.4 3H0Z" fill="#6a8caf"/><rect x="0" y="3" width="24" height="2.4" fill="#8c9bab"/><rect x="0" y="5" width="24" height="15" fill="#36576f"/></svg>
<span id="t39" class="t s" style="top:218.57px;font-size:13.5px;line-height:13.5px;color:#000;left:1006.60px;letter-spacing:0.885px;-webkit-text-stroke:0.08px #000;">1000 Ticket</span>
<svg style="left:962px;top:241px;" width="24" height="20" viewBox="0 0 24 20"><path d="M0.6 0H11L12.4 3H0Z" fill="#6a8caf"/><rect x="0" y="3" width="24" height="2.4" fill="#8c9bab"/><rect x="0" y="5" width="24" height="15" fill="#36576f"/></svg>
<span id="t40" class="t s" style="top:244.57px;font-size:13.5px;line-height:13.5px;color:#000;left:1006.60px;letter-spacing:0.934px;-webkit-text-stroke:0.08px #000;">1100 Status</span>
<svg style="left:962px;top:267px;" width="24" height="20" viewBox="0 0 24 20"><path d="M0.6 0H11L12.4 3H0Z" fill="#6a8caf"/><rect x="0" y="3" width="24" height="2.4" fill="#8c9bab"/><rect x="0" y="5" width="24" height="15" fill="#36576f"/></svg>
<span id="t41" class="t s" style="top:270.57px;font-size:13.5px;line-height:13.5px;color:#000;left:1006.60px;letter-spacing:0.535px;-webkit-text-stroke:0.08px #000;">1200 Comment</span>
<svg style="left:942px;top:299px;" width="9" height="9" viewBox="0 0 9 9"><rect x="0.5" y="0.5" width="8" height="8" fill="#fff" stroke="#9b9b9b"/><rect x="2" y="4" width="5" height="1" fill="#000"/></svg>
<svg style="left:962px;top:293px;" width="24" height="20" viewBox="0 0 24 20"><path d="M0.6 0H11L12.4 3H0Z" fill="#6a8caf"/><rect x="0" y="3" width="24" height="2.4" fill="#8c9bab"/><rect x="0" y="5" width="24" height="15" fill="#36576f"/></svg>
<span id="t42" class="t s" style="top:296.57px;font-size:13.5px;line-height:13.5px;color:#000;left:1006.60px;letter-spacing:0.549px;-webkit-text-stroke:0.08px #000;">1300 Customer</span>
<svg style="left:988px;top:319px;" width="24" height="20" viewBox="0 0 24 20"><rect width="24" height="20" fill="#36576f"/><rect width="24" height="4.6" fill="#8c9bab"/><rect x="3" y="6.6" width="6" height="1" fill="#fff"/><rect x="12" y="5.8" width="9" height="3.6" fill="#fff"/></svg>
<span id="t43" class="t s" style="top:322.57px;font-size:13.5px;line-height:13.5px;color:#000;left:1032.60px;letter-spacing:0.549px;-webkit-text-stroke:0.08px #000;">1301 Customer</span>
<svg style="left:942px;top:351px;" width="9" height="9" viewBox="0 0 9 9"><rect x="0.5" y="0.5" width="8" height="8" fill="#fff" stroke="#9b9b9b"/><rect x="2" y="4" width="5" height="1" fill="#000"/><rect x="4" y="2" width="1" height="5" fill="#000"/></svg>
<svg style="left:962px;top:345px;" width="24" height="20" viewBox="0 0 24 20"><path d="M0.6 0H11L12.4 3H0Z" fill="#6a8caf"/><rect x="0" y="3" width="24" height="2.4" fill="#8c9bab"/><rect x="0" y="5" width="24" height="15" fill="#36576f"/></svg>
<span id="t44" class="t s" style="top:348.57px;font-size:13.5px;line-height:13.5px;color:#000;left:1006.60px;letter-spacing:0.488px;-webkit-text-stroke:0.08px #000;">1400 User</span>
<svg style="left:916px;top:377px;" width="9" height="9" viewBox="0 0 9 9"><rect x="0.5" y="0.5" width="8" height="8" fill="#fff" stroke="#9b9b9b"/><rect x="2" y="4" width="5" height="1" fill="#000"/><rect x="4" y="2" width="1" height="5" fill="#000"/></svg>
<svg style="left:936px;top:371px;" width="24" height="20" viewBox="0 0 24 20"><path d="M0.6 0H11L12.4 3H0Z" fill="#6a8caf"/><rect x="0" y="3" width="24" height="2.4" fill="#8c9bab"/><rect x="0" y="5" width="24" height="15" fill="#36576f"/></svg>
<span id="t45" class="t s" style="top:374.57px;font-size:13.5px;line-height:13.5px;color:#000;left:965.60px;letter-spacing:0.455px;-webkit-text-stroke:0.08px #000;">3.Workspaces</span>
<div style="left:883px;top:409px;width:394px;height:4px;background:#cccedb;"></div>
<span id="t46" class="t s" style="top:416.84px;font-size:12px;line-height:12px;color:#1e1e1e;left:887.60px;letter-spacing:-0.100px;">Properties</span>
<svg style="left:947px;top:421px;" width="293" height="5" viewBox="0 0 293 5"><defs><pattern id="p947_421" width="4" height="4" patternUnits="userSpaceOnUse"><rect x="0" y="0" width="1" height="1" fill="#999"/><rect x="2" y="2" width="1" height="1" fill="#999"/></pattern></defs><rect width="293" height="5" fill="url(#p947_421)"/></svg>
<svg style="left:1244px;top:418px;" width="8" height="10" viewBox="0 0 8 10"><path d="M1.5 0.6H6.5M2.5 0.6V5.6M5.4 0.6V5.6M0.4 5.8H7.6M4 6V9.6" fill="none" stroke="#1e1e1e" stroke-width="1.1"/><rect x="4.6" y="0.6" width="1.4" height="5" fill="#1e1e1e"/></svg>
<svg style="left:1260px;top:419px;" width="9" height="8" viewBox="0 0 9 8"><path d="M0.6 0.4L8.4 7.6M8.4 0.4L0.6 7.6" stroke="#1e1e1e" stroke-width="1.4" fill="none"/></svg>
<div style="left:883px;top:435px;width:26px;height:26px;background:#efeff1;border:1px solid #3399ff;box-shadow:inset 0 0 0 1px #fbf4ee;"></div>
<svg style="left:886px;top:438px;" width="19" height="18" viewBox="0 0 19 18"><rect x="0" y="0" width="8" height="8" fill="#35586e"/><rect x="0" y="10" width="8" height="8" fill="#35586e"/><rect x="3.4" y="8" width="1.2" height="2" fill="#35586e"/>
<rect x="2.6" y="2.6" width="2.8" height="2.8" fill="#2e9e6e"/><rect x="2.6" y="12.6" width="2.8" height="2.8" fill="#1ba1e2"/>
<rect x="10" y="0.4" width="9" height="1.4" fill="#2e9e6e"/><rect x="10" y="3.2" width="7" height="1.4" fill="#6fbf9c"/><rect x="10" y="6" width="5" height="1.4" fill="#6fbf9c"/>
<rect x="10" y="10.6" width="9" height="1.4" fill="#1ba1e2"/><rect x="10" y="13.4" width="7" height="1.4" fill="#6fc0ea"/><rect x="10" y="16.2" width="5" height="1.4" fill="#6fc0ea"/></svg>
<div style="left:911px;top:437px;width:1px;height:23px;background:#cccedb;"></div>
<svg style="left:918px;top:439px;" width="19" height="18" viewBox="0 0 19 18"><rect x="0" y="0" width="19" height="1.4" fill="#35586e"/><rect x="0" y="3.2" width="8.4" height="1.4" fill="#2e9e6e"/><rect x="10.6" y="3.2" width="8.4" height="1.4" fill="#2e9e6e"/><rect x="0" y="6.2" width="8.4" height="1.4" fill="#5ab58d"/><rect x="10.6" y="6.2" width="8.4" height="1.4" fill="#5ab58d"/><rect x="0" y="9.2" width="8.4" height="1.4" fill="#5ab58d"/><rect x="10.6" y="9.2" width="8.4" height="1.4" fill="#5ab58d"/><rect x="0" y="12.2" width="8.4" height="1.4" fill="#1ba1e2"/><rect x="10.6" y="12.2" width="8.4" height="1.4" fill="#1ba1e2"/><rect x="0" y="15.2" width="8.4" height="1.4" fill="#5cb8e6"/><rect x="10.6" y="15.2" width="8.4" height="1.4" fill="#5cb8e6"/></svg>
<div style="left:943px;top:437px;width:1px;height:23px;background:#cccedb;"></div>
<span id="t47" class="t s" style="top:436.87px;font-size:11.5px;line-height:11.5px;color:#2e9e6e;left:950.00px;font-weight:bold;">A</span>
<span id="t48" class="t s" style="top:447.87px;font-size:11.5px;line-height:11.5px;color:#e0403a;left:950.40px;font-weight:bold;">Z</span>
<svg style="left:960px;top:439.5px;" width="9" height="18" viewBox="0 0 9 18"><rect x="3.6" y="0" width="1.6" height="1.8" fill="#35586e"/><rect x="3.6" y="3" width="1.6" height="2.4" fill="#35586e"/><path d="M4.4 6.6V16M0.8 12.4L4.4 16L8 12.4" fill="none" stroke="#35586e" stroke-width="1.7"/></svg>
<div style="left:975px;top:437px;width:1px;height:23px;background:#cccedb;"></div>
<div style="left:979px;top:437px;width:150px;height:22px;background:#eeeef2;border:1px solid #cfcfd6;"></div>
<svg style="left:1117px;top:446px;" width="8" height="4" viewBox="0 0 8 4"><path d="M0 0H8L4.0 4Z" fill="#c2c2c2"/></svg>
<div style="left:883px;top:464px;width:378px;height:212px;background:#eeeef2;"></div>
<div style="left:896px;top:464px;width:365px;height:19px;background:#f6f6f6;"></div>
<div style="left:896px;top:482px;width:365px;height:1px;background:#eeeef1;"></div>
<div style="left:1081px;top:464px;width:1px;height:19px;background:#eeeef1;"></div>
<span id="t49" class="t s" style="top:466.84px;font-size:12px;line-height:12px;color:#1e1e1e;left:898.40px;letter-spacing:-0.166px;">Special Effect</span>
<span id="t50" class="t s" style="top:466.84px;font-size:12px;line-height:12px;color:#1e1e1e;left:1084.30px;letter-spacing:0.032px;">2-Sunken</span>
<div style="left:896px;top:483px;width:365px;height:19px;background:#f6f6f6;"></div>
<div style="left:896px;top:501px;width:365px;height:1px;background:#eeeef1;"></div>
<div style="left:1081px;top:483px;width:1px;height:19px;background:#eeeef1;"></div>
<span id="t51" class="t s" style="top:485.84px;font-size:12px;line-height:12px;color:#1e1e1e;left:898.40px;letter-spacing:-0.043px;">Fore Color</span>
<div style="left:1084px;top:485px;width:19px;height:14px;background:#000;"></div>
<span id="t52" class="t s" style="top:485.84px;font-size:12px;line-height:12px;color:#1e1e1e;left:1109.70px;">0</span>
<div style="left:896px;top:502px;width:365px;height:19px;background:#f6f6f6;"></div>
<div style="left:896px;top:520px;width:365px;height:1px;background:#eeeef1;"></div>
<div style="left:1081px;top:502px;width:1px;height:19px;background:#eeeef1;"></div>
<span id="t53" class="t s" style="top:504.84px;font-size:12px;line-height:12px;color:#1e1e1e;left:898.40px;letter-spacing:0.181px;">Text Align</span>
<span id="t54" class="t s" style="top:504.84px;font-size:12px;line-height:12px;color:#1e1e1e;left:1084.30px;letter-spacing:0.323px;">0-Left</span>
<svg style="left:884px;top:526px;" width="9" height="9" viewBox="0 0 9 9"><rect x="0.5" y="0.5" width="8" height="8" fill="#f4f4f6" stroke="#1e1e1e"/><rect x="2" y="4" width="5" height="1" fill="#000"/></svg>
<span id="t55" class="t s" style="top:523.84px;font-size:12px;line-height:12px;color:#1e1e1e;left:898.40px;font-weight:bold;letter-spacing:-0.160px;">Position &amp; Size</span>
<div style="left:896px;top:540px;width:365px;height:19px;background:#f6f6f6;"></div>
<div style="left:896px;top:558px;width:365px;height:1px;background:#eeeef1;"></div>
<div style="left:1081px;top:540px;width:1px;height:19px;background:#eeeef1;"></div>
<span id="t56" class="t s" style="top:542.84px;font-size:12px;line-height:12px;color:#1e1e1e;left:898.40px;letter-spacing:0.328px;">Left</span>
<div style="left:896px;top:559px;width:365px;height:19px;background:#f6f6f6;"></div>
<div style="left:896px;top:577px;width:365px;height:1px;background:#eeeef1;"></div>
<div style="left:1081px;top:559px;width:1px;height:19px;background:#eeeef1;"></div>
<span id="t57" class="t s" style="top:561.84px;font-size:12px;line-height:12px;color:#1e1e1e;left:898.40px;letter-spacing:0.320px;">Top</span>
<div style="left:896px;top:578px;width:365px;height:19px;background:#f6f6f6;"></div>
<div style="left:896px;top:578px;width:185px;height:19px;background:#eeeef2;"></div>
<div style="left:896px;top:596px;width:365px;height:1px;background:#eeeef1;"></div>
<div style="left:1081px;top:578px;width:1px;height:19px;background:#eeeef1;"></div>
<span id="t58" class="t s" style="top:580.84px;font-size:12px;line-height:12px;color:#1e1e1e;left:898.40px;letter-spacing:0.503px;">Width</span>
<span id="t59" class="t s" style="top:580.84px;font-size:12px;line-height:12px;color:#1e1e1e;left:1084.30px;letter-spacing:-0.241px;">6,0см (3402)</span>
<div style="left:1244px;top:578px;width:17px;height:18px;background:#f6f6f6;border:1px solid #d5d7e5;"></div>
<svg style="left:1248px;top:590px;" width="10" height="2" viewBox="0 0 10 2"><rect x="0" y="0" width="2" height="2"/><rect x="4" y="0" width="2" height="2"/><rect x="8" y="0" width="2" height="2"/></svg>
<div style="left:896px;top:597px;width:365px;height:19px;background:#f6f6f6;"></div>
<div style="left:896px;top:615px;width:365px;height:1px;background:#eeeef1;"></div>
<div style="left:1081px;top:597px;width:1px;height:19px;background:#eeeef1;"></div>
<span id="t60" class="t s" style="top:599.84px;font-size:12px;line-height:12px;color:#1e1e1e;left:898.40px;letter-spacing:0.463px;">Height</span>
<span id="t61" class="t s" style="top:599.84px;font-size:12px;line-height:12px;color:#1e1e1e;left:1084.30px;letter-spacing:-0.218px;">0,6см (340)</span>
<svg style="left:884px;top:621px;" width="9" height="9" viewBox="0 0 9 9"><rect x="0.5" y="0.5" width="8" height="8" fill="#f4f4f6" stroke="#1e1e1e"/><rect x="2" y="4" width="5" height="1" fill="#000"/></svg>
<span id="t62" class="t s" style="top:618.84px;font-size:12px;line-height:12px;color:#1e1e1e;left:898.40px;font-weight:bold;letter-spacing:0.091px;">Border</span>
<div style="left:896px;top:635px;width:365px;height:19px;background:#f6f6f6;"></div>
<div style="left:896px;top:653px;width:365px;height:1px;background:#eeeef1;"></div>
<div style="left:1081px;top:635px;width:1px;height:19px;background:#eeeef1;"></div>
<span id="t63" class="t s" style="top:637.84px;font-size:12px;line-height:12px;color:#1e1e1e;left:898.40px;letter-spacing:-0.194px;">Border Style</span>
<span id="t64" class="t s" style="top:637.84px;font-size:12px;line-height:12px;color:#1e1e1e;left:1084.30px;letter-spacing:0.468px;">0-None</span>
<div style="left:896px;top:654px;width:365px;height:19px;background:#f6f6f6;"></div>
<div style="left:896px;top:672px;width:365px;height:1px;background:#eeeef1;"></div>
<div style="left:1081px;top:654px;width:1px;height:19px;background:#eeeef1;"></div>
<span id="t65" class="t s" style="top:656.84px;font-size:12px;line-height:12px;color:#1e1e1e;left:898.40px;letter-spacing:0.006px;">Border Color</span>
<div style="left:1084px;top:656px;width:19px;height:14px;background:#000;"></div>
<span id="t66" class="t s" style="top:656.84px;font-size:12px;line-height:12px;color:#1e1e1e;left:1109.70px;">0</span>
<div style="left:896px;top:673px;width:365px;height:3px;background:#f6f6f6;"></div>
<div style="left:896px;top:675px;width:365px;height:1px;background:#eeeef1;"></div>
<div style="left:1081px;top:673px;width:1px;height:3px;background:#eeeef1;"></div>
<div style="left:1261px;top:464px;width:1px;height:212px;background:#fafafa;"></div>
<div style="left:1262px;top:464px;width:16px;height:212px;background:#f0f0f0;"></div>
<div style="left:1278px;top:1px;width:1px;height:737px;background:#f7f7f9;"></div>
<div style="left:1262px;top:568px;width:15px;height:44px;background:#cdcdcd;"></div>
<svg style="left:1265px;top:469px;" width="9" height="7" viewBox="0 0 9 7"><path d="M1.4 6.2L4.5 2.9L7.6 6.2" fill="none" stroke="#505050" stroke-width="2"/></svg>
<svg style="left:1265px;top:664px;" width="9" height="7" viewBox="0 0 9 7"><path d="M1.4 1.6L4.5 4.9L7.6 1.6" fill="none" stroke="#505050" stroke-width="2"/></svg>
<div style="left:883px;top:677px;width:395px;height:61px;background:#f5f5f5;"></div>
<div style="left:883px;top:680px;width:395px;height:1px;background:#eeeef2;"></div>
<span id="t67" class="t s" style="top:684.44px;font-size:12px;line-height:12px;color:#1e1e1e;left:886.40px;font-weight:bold;letter-spacing:0.445px;">Width</span>
</body></html>
